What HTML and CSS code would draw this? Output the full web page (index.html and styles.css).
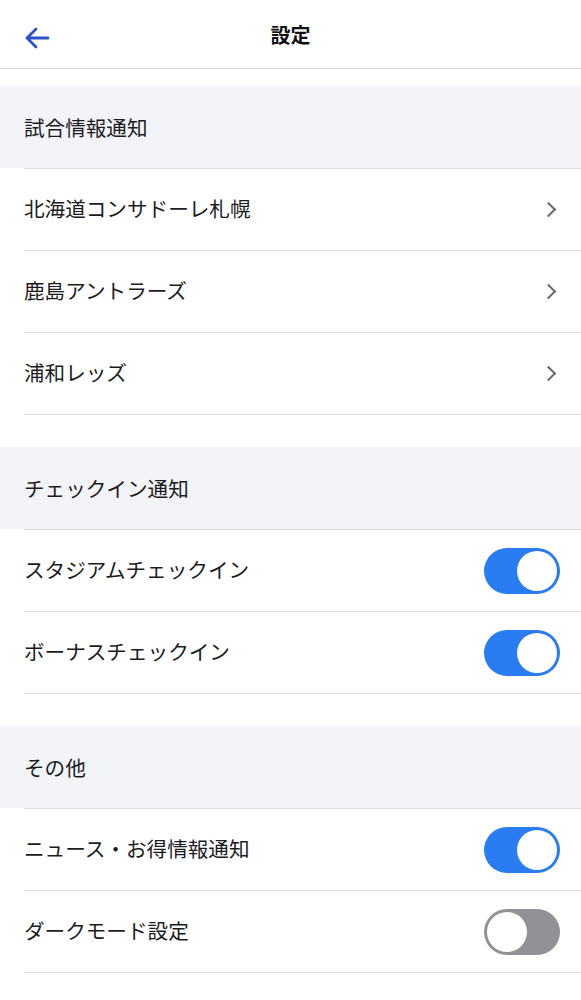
FILE: index.html
```html
<!DOCTYPE html>
<html lang="ja">
<head>
    <meta charset="UTF-8">
    <meta name="viewport" content="width=device-width, initial-scale=1.0">
    <title>設定</title>
    <link rel="stylesheet" href="styles.css">
</head>
<body>
    <header class="nav-bar">
        <button class="back-btn" aria-label="戻る">
            <svg width="26" height="22" viewBox="0 0 26 22">
                <path d="M24 11H3M12 2L3 11l9 9" fill="none" stroke="#2c4fca" stroke-width="2.8" stroke-linecap="round" stroke-linejoin="round"/>
            </svg>
        </button>
        <h1>設定</h1>
    </header>

    <section class="group">
        <div class="group-title">試合情報通知</div>
        <div class="row"><span>北海道コンサドーレ札幌</span><span class="chevron"></span></div>
        <div class="row"><span>鹿島アントラーズ</span><span class="chevron"></span></div>
        <div class="row"><span>浦和レッズ</span><span class="chevron"></span></div>
    </section>

    <section class="group">
        <div class="group-title">チェックイン通知</div>
        <div class="row"><span>スタジアムチェックイン</span><span class="toggle on"></span></div>
        <div class="row"><span>ボーナスチェックイン</span><span class="toggle on"></span></div>
    </section>

    <section class="group">
        <div class="group-title">その他</div>
        <div class="row"><span>ニュース・お得情報通知</span><span class="toggle on"></span></div>
        <div class="row"><span>ダークモード設定</span><span class="toggle"></span></div>
    </section>
</body>
</html>
```

FILE: styles.css
```css
body {
    margin: 0;
    background: #fff;
    font-family: "Noto Sans CJK JP", "Noto Sans", sans-serif;
    color: #1c1c1e;
}
.nav-bar {
    position: relative;
    height: 68px;
    display: flex;
    align-items: center;
    justify-content: center;
    border-bottom: 1px solid #d4d4d6;
}
.nav-bar h1 {
    margin: 0;
    font-size: 20px;
    font-weight: bold;
    color: #111;
}
.back-btn {
    position: absolute;
    left: 24px;
    top: 27px;
    padding: 0;
    border: none;
    background: none;
    line-height: 0;
}
.group {
    margin-top: 17px;
}
.group + .group {
    margin-top: 32px;
}
.group-title {
    height: 82px;
    display: flex;
    align-items: center;
    padding-left: 24px;
    background: #f3f4f8;
    font-size: 20.6px;
}
.row {
    height: 81px;
    margin-left: 24px;
    padding-right: 21px;
    display: flex;
    align-items: center;
    justify-content: space-between;
    border-top: 1px solid #dcdcde;
    font-size: 20.6px;
}
.row > span:first-child {
    padding-bottom: 3px;
}
.row:last-child {
    border-bottom: 1px solid #dcdcde;
}
.chevron {
    width: 9px;
    height: 9px;
    margin-right: 6px;
    border-top: 2.4px solid #6b6b6e;
    border-right: 2.4px solid #6b6b6e;
    transform: rotate(45deg);
}
.toggle {
    position: relative;
    width: 76px;
    height: 46px;
    border-radius: 23px;
    background: #919196;
}
.toggle::after {
    content: "";
    position: absolute;
    top: 3px;
    left: 3px;
    width: 40px;
    height: 40px;
    border-radius: 50%;
    background: #fff;
}
.toggle.on {
    background: #2a7cf2;
}
.toggle.on::after {
    left: 33px;
}
```
